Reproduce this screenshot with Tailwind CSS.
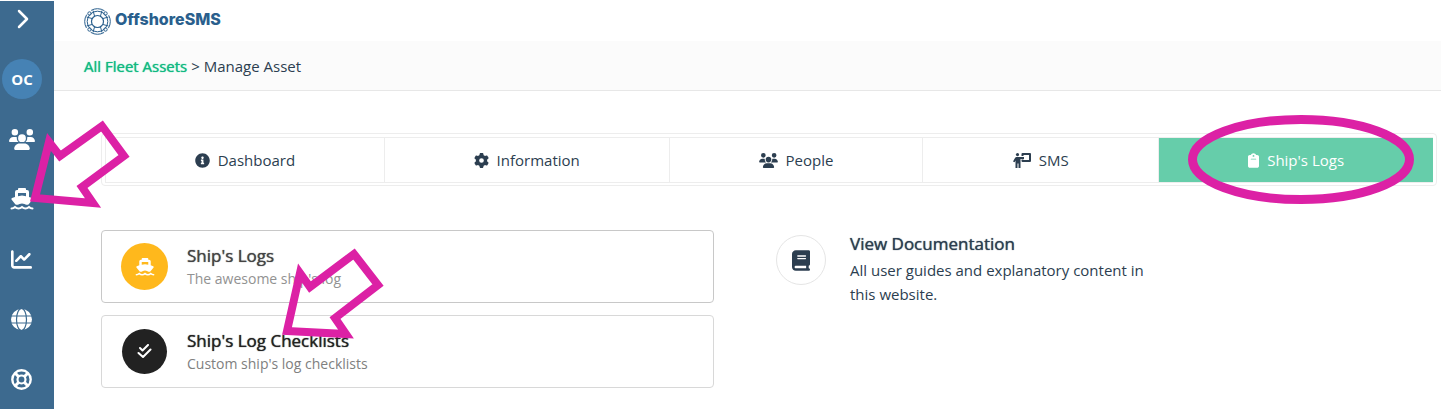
<!DOCTYPE html>
<html lang="en">

<head>
  <meta charset="UTF-8" />
  <meta name="viewport" content="width=device-width, initial-scale=1.0" />
  <title>OffshoreSMS - Manage Asset</title>
  <script src="https://cdn.jsdelivr.net/npm/@tailwindcss/browser@4"></script>
</head>

<body class="bg-white font-['Open_Sans',sans-serif] text-[15px] text-[#2c3e50]">
  <!-- shared icons -->
  <svg class="hidden">
    <symbol id="icon-users" viewBox="0 0 640 512">
      <path fill="currentColor" d="M144 0a80 80 0 1 1 0 160A80 80 0 1 1 144 0zM512 0a80 80 0 1 1 0 160A80 80 0 1 1 512 0zM0 298.7C0 239.8 47.8 192 106.7 192h42.7c15.9 0 31 3.5 44.6 9.7c-1.3 7.2-1.9 14.7-1.9 22.3c0 38.2 16.8 72.5 43.3 96c-.2 0-.4 0-.7 0H21.3C9.6 320 0 310.4 0 298.7zM405.3 320c-.2 0-.4 0-.7 0c26.6-23.5 43.3-57.8 43.3-96c0-7.6-.7-15-1.9-22.3c13.6-6.3 28.7-9.7 44.6-9.7h42.7C592.2 192 640 239.8 640 298.7c0 11.8-9.6 21.3-21.3 21.3H405.3zM224 224a96 96 0 1 1 192 0 96 96 0 1 1 -192 0zM128 485.3C128 411.7 187.7 352 261.3 352H378.7C452.3 352 512 411.7 512 485.3c0 14.7-11.9 26.7-26.7 26.7H154.7c-14.7 0-26.7-11.9-26.7-26.7z" />
    </symbol>
    <symbol id="icon-ship" viewBox="0 0 24 22">
      <path fill="currentColor" fill-rule="evenodd" d="M9 0H15Q16 0 16 1V2H17Q19 2 19 4V9L22 10Q23 10.500 22.500 11.500L18.500 16.500Q17 17.200 15.500 16.500L14.500 16Q12 14.800 9.500 16L8.500 16.500Q7 17.200 5.500 16.500L1.500 11.500Q1 10.500 2 10L5 9V4Q5 2 7 2H8V1Q8 0 9 0zM8 5V8.300L12 7.500 16 8.300V5z" />
      <path fill="none" stroke="currentColor" stroke-width="2" stroke-linecap="round" d="M1.500 20.500Q3.500 20.500 5 19 8.500 22 12 19 15.500 22 19 19 20.500 20.500 22.500 20.500" />
    </symbol>
  </svg>

  <div class="flex min-h-screen pt-px">
    <aside class="w-[54px] shrink-0 bg-[#3d6a8f] text-white">
      <nav class="w-11 flex flex-col items-center">
        <button class="h-9 w-full pl-0.5 flex items-center justify-center" aria-label="Expand menu">
          <svg class="w-3 h-5" viewBox="0 0 12 20" fill="none" stroke="currentColor" stroke-width="2.5" stroke-linecap="round" stroke-linejoin="round">
            <path d="M2 2l8 8-8 8" />
          </svg>
        </button>
        <a href="#" class="mt-[22px] mb-[10px] size-10 rounded-full bg-[#4682b4] flex items-center justify-center font-bold">OC</a>
        <a href="#" class="h-[60px] w-full flex items-center justify-center" aria-label="People">
          <svg class="w-[26px] h-[21px]"><use href="#icon-users" /></svg>
        </a>
        <a href="#" class="h-[60px] w-full flex items-center justify-center" aria-label="Fleet">
          <svg class="w-6 h-[22px]"><use href="#icon-ship" /></svg>
        </a>
        <a href="#" class="h-[60px] w-full pr-px flex items-center justify-center" aria-label="Reports">
          <svg class="size-[21px]" viewBox="0 0 512 512" fill="currentColor">
            <path d="M64 64c0-17.700-14.300-32-32-32S0 46.300 0 64V400c0 44.200 35.800 80 80 80H480c17.700 0 32-14.300 32-32s-14.300-32-32-32H80c-8.800 0-16-7.200-16-16V64zm406.600 86.600c12.500-12.500 12.500-32.800 0-45.300s-32.800-12.500-45.300 0L320 210.700l-57.400-57.400c-12.500-12.500-32.800-12.500-45.300 0l-112 112c-12.500 12.500-12.500 32.800 0 45.300s32.800 12.500 45.300 0L240 221.300l57.400 57.400c12.500 12.500 32.800 12.500 45.300 0l128-128z" />
          </svg>
        </a>
        <a href="#" class="h-[60px] w-full pr-px flex items-center justify-center" aria-label="Sites">
          <svg class="size-[21px]" viewBox="0 0 21 21">
            <circle cx="10.500" cy="10.500" r="10.500" fill="currentColor" />
            <g fill="none" stroke="#3d6a8f" stroke-width="1.200">
              <ellipse cx="10.500" cy="10.500" rx="5" ry="11" />
              <path d="M0 7h21M0 14h21" />
            </g>
          </svg>
        </a>
        <a href="#" class="h-[60px] w-full pr-px flex items-center justify-center" aria-label="Support">
          <svg class="size-[21px]" viewBox="0 0 21 21" fill="none" stroke="currentColor">
            <circle cx="10.500" cy="10.500" r="9.200" stroke-width="2.400" />
            <circle cx="10.500" cy="10.500" r="4" stroke-width="2.200" />
            <path stroke-width="3" d="M4 4l3.500 3.500M17 4l-3.500 3.500M4 17l3.500-3.500M17 17l-3.500-3.500" />
          </svg>
        </a>
      </nav>
    </aside>

    <main class="grow min-w-0">
      <header class="h-10 pl-[30px] flex items-center">
        <a href="#" class="flex items-center gap-1 text-[#2a5f8d]">
          <svg class="size-[27px]" viewBox="0 0 27 27" fill="none" stroke="currentColor">
            <circle cx="13.500" cy="13.500" r="12.800" stroke-width="1" stroke-dasharray="14 6.100" stroke-dashoffset="7" />
            <circle cx="13.500" cy="13.500" r="10.300" stroke-width="1" />
            <circle cx="13.500" cy="13.500" r="6" stroke-width="1.200" />
            <g stroke-width="1">
              <path d="M9 2.500l1.500 5.500M18 2.500l-1.500 5.500M9 24.500l1.500-5.500M18 24.500l-1.500-5.500M2.500 9l5.500 1.500M2.500 18l5.500-1.500M24.500 9l-5.500 1.500M24.500 18l-5.500-1.500" />
              <circle cx="5.500" cy="5.500" r="1.700" />
              <circle cx="21.500" cy="5.500" r="1.700" />
              <circle cx="5.500" cy="21.500" r="1.700" />
              <circle cx="21.500" cy="21.500" r="1.700" />
            </g>
          </svg>
          <span class="font-['Inter',sans-serif] font-extrabold text-base leading-5 pb-1">OffshoreSMS</span>
        </a>
      </header>
      <div class="h-[50px] pt-0.5 pl-[30px] flex items-center gap-1 bg-[#fbfbfb] border-b border-[#e7e7e7]">
        <a href="#" class="text-[#10b981] [text-shadow:0_0_1px_currentColor]">All Fleet Assets</a>
        <span>&gt; Manage Asset</span>
      </div>

      <div class="pt-[42px] pl-[47px] pr-1">
        <div class="rounded border border-[#ededed] p-[3px] pb-[2px]">
          <nav class="grid grid-cols-[279fr_285fr_254fr_236fr_274fr] h-[46px] border border-r-0 border-[#ededed]">
            <a href="#" class="flex items-center justify-center gap-2 border-r border-[#ededed]">
              <svg class="size-[15px]" viewBox="0 0 512 512" fill="currentColor">
                <path d="M256 8C119.043 8 8 119.083 8 256c0 136.997 111.043 248 248 248s248-111.003 248-248C504 119.083 392.957 8 256 8zm0 110c23.196 0 42 18.804 42 42s-18.804 42-42 42-42-18.804-42-42 18.804-42 42-42zm56 254c0 6.627-5.373 12-12 12h-88c-6.627 0-12-5.373-12-12v-24c0-6.627 5.373-12 12-12h12v-64h-12c-6.627 0-12-5.373-12-12v-24c0-6.627 5.373-12 12-12h64c6.627 0 12 5.373 12 12v100h12c6.627 0 12 5.373 12 12v24z" />
              </svg>
              Dashboard
            </a>
            <a href="#" class="flex items-center justify-center gap-2 border-r border-[#ededed]">
              <svg class="size-[15px]" viewBox="0 0 512 512" fill="currentColor">
                <path d="M495.900 166.600c3.200 8.700 .5 18.400-6.400 24.600l-43.300 39.400c1.100 8.300 1.700 16.800 1.700 25.400s-.6 17.100-1.700 25.400l43.300 39.400c6.900 6.200 9.600 15.900 6.400 24.600c-4.400 11.900-9.700 23.300-15.800 34.300l-4.700 8.100c-6.600 11-14 21.400-22.100 31.200c-5.900 7.200-15.700 9.600-24.500 6.800l-55.700-17.700c-13.400 10.300-28.200 18.900-44 25.400l-12.500 57.100c-2 9.100-9 16.300-18.200 17.800c-13.800 2.300-28 3.500-42.500 3.500s-28.700-1.200-42.500-3.500c-9.200-1.500-16.200-8.700-18.200-17.800l-12.500-57.100c-15.800-6.500-30.600-15.100-44-25.400L83.100 425.900c-8.800 2.800-18.600 .3-24.500-6.800c-8.100-9.800-15.500-20.200-22.100-31.200l-4.700-8.100c-6.100-11-11.400-22.400-15.800-34.300c-3.200-8.700-.5-18.400 6.400-24.600l43.300-39.400C64.600 273.100 64 264.600 64 256s.6-17.100 1.700-25.400L22.400 191.200c-6.900-6.200-9.600-15.900-6.400-24.600c4.400-11.900 9.700-23.300 15.800-34.300l4.700-8.100c6.600-11 14-21.400 22.100-31.200c5.900-7.200 15.700-9.600 24.500-6.800l55.700 17.700c13.400-10.300 28.200-18.900 44-25.400l12.500-57.100c2-9.100 9-16.300 18.200-17.800C227.300 1.200 241.500 0 256 0s28.700 1.200 42.500 3.500c9.200 1.500 16.200 8.700 18.200 17.800l12.500 57.100c15.800 6.500 30.600 15.100 44 25.400l55.700-17.700c8.800-2.800 18.600-.3 24.500 6.800c8.100 9.800 15.500 20.200 22.100 31.200l4.700 8.100c6.100 11 11.400 22.400 15.800 34.300zM256 336a80 80 0 1 0 0-160 80 80 0 1 0 0 160z" />
              </svg>
              Information
            </a>
            <a href="#" class="flex items-center justify-center gap-2 border-r border-[#ededed]">
              <svg class="w-[19px] h-[15px]"><use href="#icon-users" /></svg>
              People
            </a>
            <a href="#" class="flex items-center justify-center gap-2 border-r border-[#ededed]">
              <svg class="w-[18px] h-[15px]" viewBox="0 0 18 15" fill="none" stroke="currentColor">
                <circle cx="4.500" cy="1.600" r="1.600" fill="currentColor" stroke="none" />
                <path fill="currentColor" stroke="none" d="M3.500 4H11v2H7.500v9H5.500v-4.500h-1V15h-2V7.500L1.600 9.300 0 8.400l2-3.500Q2.600 4 3.500 4z" />
                <path stroke-width="2" stroke-linejoin="round" d="M9.500 3V1H17v7h-7.500V6.500" />
              </svg>
              SMS
            </a>
            <a href="#" class="flex items-center justify-center gap-2 bg-[#66cdaa] text-white" aria-current="page">
              <svg class="w-[11px] h-[15px]" viewBox="0 0 384 512" fill="currentColor">
                <path d="M192 0c-41.800 0-77.400 26.700-90.500 64H64C28.700 64 0 92.700 0 128V448c0 35.300 28.700 64 64 64H320c35.300 0 64-28.700 64-64V128c0-35.300-28.700-64-64-64H282.500C269.400 26.700 233.800 0 192 0zm0 64a32 32 0 1 1 0 64 32 32 0 1 1 0-64zM112 192H272c8.800 0 16 7.200 16 16s-7.200 16-16 16H112c-8.800 0-16-7.200-16-16s7.200-16 16-16z" />
              </svg>
              Ship's Logs
            </a>
          </nav>
        </div>

        <div class="mt-11 grid grid-cols-[613fr_723fr]">
          <div class="flex flex-col gap-3">
            <a href="#" class="h-[73px] pl-[19px] flex items-center gap-[19px] rounded border border-[#c8c8c8]">
              <span class="size-[47px] rounded-full bg-[#ffb81c] text-white flex items-center justify-center">
                <svg class="w-5 h-[18px]"><use href="#icon-ship" /></svg>
              </span>
              <span>
                <span class="block text-[17px] leading-6 text-[#444] [text-shadow:0_0_1px_currentColor]">Ship's Logs</span>
                <span class="block text-sm leading-[22px] text-[#929292]">The awesome ship's log</span>
              </span>
            </a>
            <a href="#" class="h-[73px] pl-5 flex items-center gap-5 rounded border border-[#d8d8d8]">
              <span class="size-[45px] rounded-full bg-[#222] text-white flex items-center justify-center">
                <svg class="size-[15px]" viewBox="0 0 15 15" fill="none" stroke="currentColor" stroke-width="2" stroke-linecap="round" stroke-linejoin="round">
                  <path d="M3 4l2.500 2.500L11 1M1.500 9L6 13l7.500-7.500" />
                </svg>
              </span>
              <span>
                <span class="block text-[17px] leading-6 text-[#222] [text-shadow:0_0_1px_currentColor]">Ship's Log Checklists</span>
                <span class="block text-sm leading-[22px] text-[#808080]">Custom ship's log checklists</span>
              </span>
            </a>
          </div>

          <section class="pl-[62px] flex items-start gap-6">
            <span class="mt-[5px] size-[50px] shrink-0 rounded-full border border-[#e5e5e5] flex items-center justify-center">
              <svg class="w-[18px] h-[21px]" viewBox="0 0 448 512" fill="currentColor">
                <path d="M96 0C43 0 0 43 0 96V416c0 53 43 96 96 96H384h32c17.700 0 32-14.300 32-32s-14.300-32-32-32V384c17.700 0 32-14.300 32-32V32c0-17.700-14.300-32-32-32H384 96zm0 384H352v64H96c-17.700 0-32-14.300-32-32s14.300-32 32-32zm32-240c0-8.800 7.200-16 16-16H336c8.800 0 16 7.200 16 16s-7.200 16-16 16H144c-8.800 0-16-7.200-16-16zm16 48H336c8.800 0 16 7.200 16 16s-7.200 16-16 16H144c-8.800 0-16-7.200-16-16s7.200-16 16-16z" />
              </svg>
            </span>
            <div class="w-[310px] pt-0.5">
              <h2 class="text-[17px] leading-6 [text-shadow:0_0_1px_currentColor]">View Documentation</h2>
              <p class="leading-6 mt-0.5">All user guides and explanatory content in this website.</p>
            </div>
          </section>
        </div>
      </div>
    </main>
  </div>

  <!-- annotations over the page -->
  <svg class="absolute top-0 left-0 pointer-events-none" width="1441" height="409" fill="none" stroke="#dc21a5">
    <path stroke-width="8" d="M35 198L49 142 60 156 102 126 124 156 82 187 93 203z" />
    <path stroke-width="8" d="M287 331L300 273 310 287 354 254 378 285 335 318 346 334z" />
    <ellipse cx="1301" cy="159.500" rx="108.500" ry="40" stroke-width="9" />
  </svg>
</body>

</html>
